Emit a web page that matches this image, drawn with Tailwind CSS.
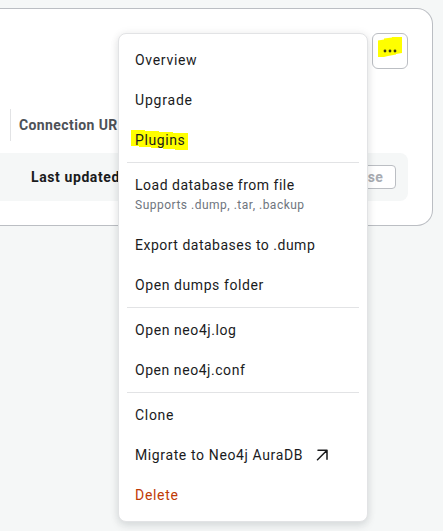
<!DOCTYPE html>
<html lang="en">
<head>
<meta charset="utf-8">
<title>Instance menu</title>
<script src="https://cdn.jsdelivr.net/npm/@tailwindcss/browser@4"></script>
</head>
<body class="relative h-[531px] w-[443px] overflow-hidden bg-[#f5f7f7] font-['Roboto',sans-serif] text-[14px] text-[#1a1b1d]">
  <main class="pt-2">
    <section class="flex h-[218px] w-[433px] flex-col rounded-r-2xl border border-l-0 border-[#bbbec3] bg-white pt-6 pr-6">
      <header class="flex justify-end">
        <button class="relative flex size-9 items-center justify-center rounded-md border border-[#bbbec3]" aria-label="More">
          <svg class="absolute -left-px -top-px" width="36" height="36" viewBox="0 0 36 36">
            <path d="M6 7.5L12 6.5V5.5L20 4.5V4H30V20L24 21V21.5L16 23L12 24H6Z" fill="#ffff00"/>
            <g fill="#343410"><circle cx="13" cy="18" r="1.4"/><circle cx="18" cy="18" r="1.4"/><circle cx="23" cy="18" r="1.4"/></g>
          </svg>
        </button>
      </header>
      <div class="mt-10 ml-[10px] flex h-8 items-center border-l border-[#e2e3e5] pl-2 font-bold tracking-[0.4px] text-[#4d5157]">Connection URI</div>
      <div class="mt-3 flex h-12 items-center justify-between rounded-r-lg bg-[#f5f7f7] pr-3 pl-[31px]">
        <span class="font-bold tracking-[0.6px]">Last updated</span>
        <button class="flex h-6 w-16 items-center justify-end rounded border border-[#bbbec3] bg-white pr-3 font-bold tracking-[0.3px] text-[#a8acb2]">Close</button>
      </div>
    </section>
  </main>

  <nav class="absolute top-[33px] left-[118px] flex h-[489px] w-[250px] flex-col rounded-lg border border-[#e2e3e5] bg-white px-2 pt-[6px] shadow-[0_4px_8px_rgba(12,26,37,0.1),0_0_10px_rgba(12,26,37,0.06)]">
    <a class="flex h-10 items-center pl-2 tracking-[0.7px]"><span>Overview</span></a>
    <a class="flex h-10 items-center pl-2 tracking-[0.8px]"><span>Upgrade</span></a>
    <a class="relative flex h-10 items-center pl-2 tracking-[0.6px]">
      <svg class="absolute top-[9px] left-1" width="57" height="22" viewBox="0 0 57 22"><path d="M0 1H14V2H28V3H42V4H57V21H44V20H32V19H20V18H8V17H0Z" fill="#ffff00"/></svg>
      <span class="relative">Plugins</span>
    </a>
    <hr class="my-[2px] border-[#e2e3e5]">
    <a class="flex h-[60px] flex-col pt-[10px] pl-2"><span class="leading-5 tracking-[0.5px]">Load database from file</span><span class="text-[12px] leading-5 tracking-[0.5px] text-[#6f757e]">Supports .dump, .tar, .backup</span></a>
    <a class="flex h-10 items-center pl-2 tracking-[0.5px]"><span>Export databases to .dump</span></a>
    <a class="flex h-10 items-center pl-2 tracking-[0.58px]"><span>Open dumps folder</span></a>
    <hr class="my-[2px] border-[#e2e3e5]">
    <a class="flex h-10 items-center pl-2 tracking-[0.58px]"><span>Open neo4j.log</span></a>
    <a class="flex h-10 items-center pl-2 tracking-[0.55px]"><span>Open neo4j.conf</span></a>
    <hr class="my-[2px] border-[#e2e3e5]">
    <a class="flex h-10 items-center pl-2 tracking-[0.7px]"><span>Clone</span></a>
    <a class="flex h-10 items-center pl-2 tracking-[0.62px]"><span class="w-[181px]">Migrate to Neo4j AuraDB</span>
      <svg width="12" height="12" viewBox="0 0 12 12" fill="none" stroke="#1a1b1d" stroke-width="1.5" stroke-linecap="round" stroke-linejoin="round"><path d="M2 1.2H11V10.2M11 1.2L1.5 10.7"/></svg></a>
    <a class="flex h-10 items-center pl-2 tracking-[0.7px] text-[#bf3a06]"><span>Delete</span></a>
  </nav>
</body>
</html>
